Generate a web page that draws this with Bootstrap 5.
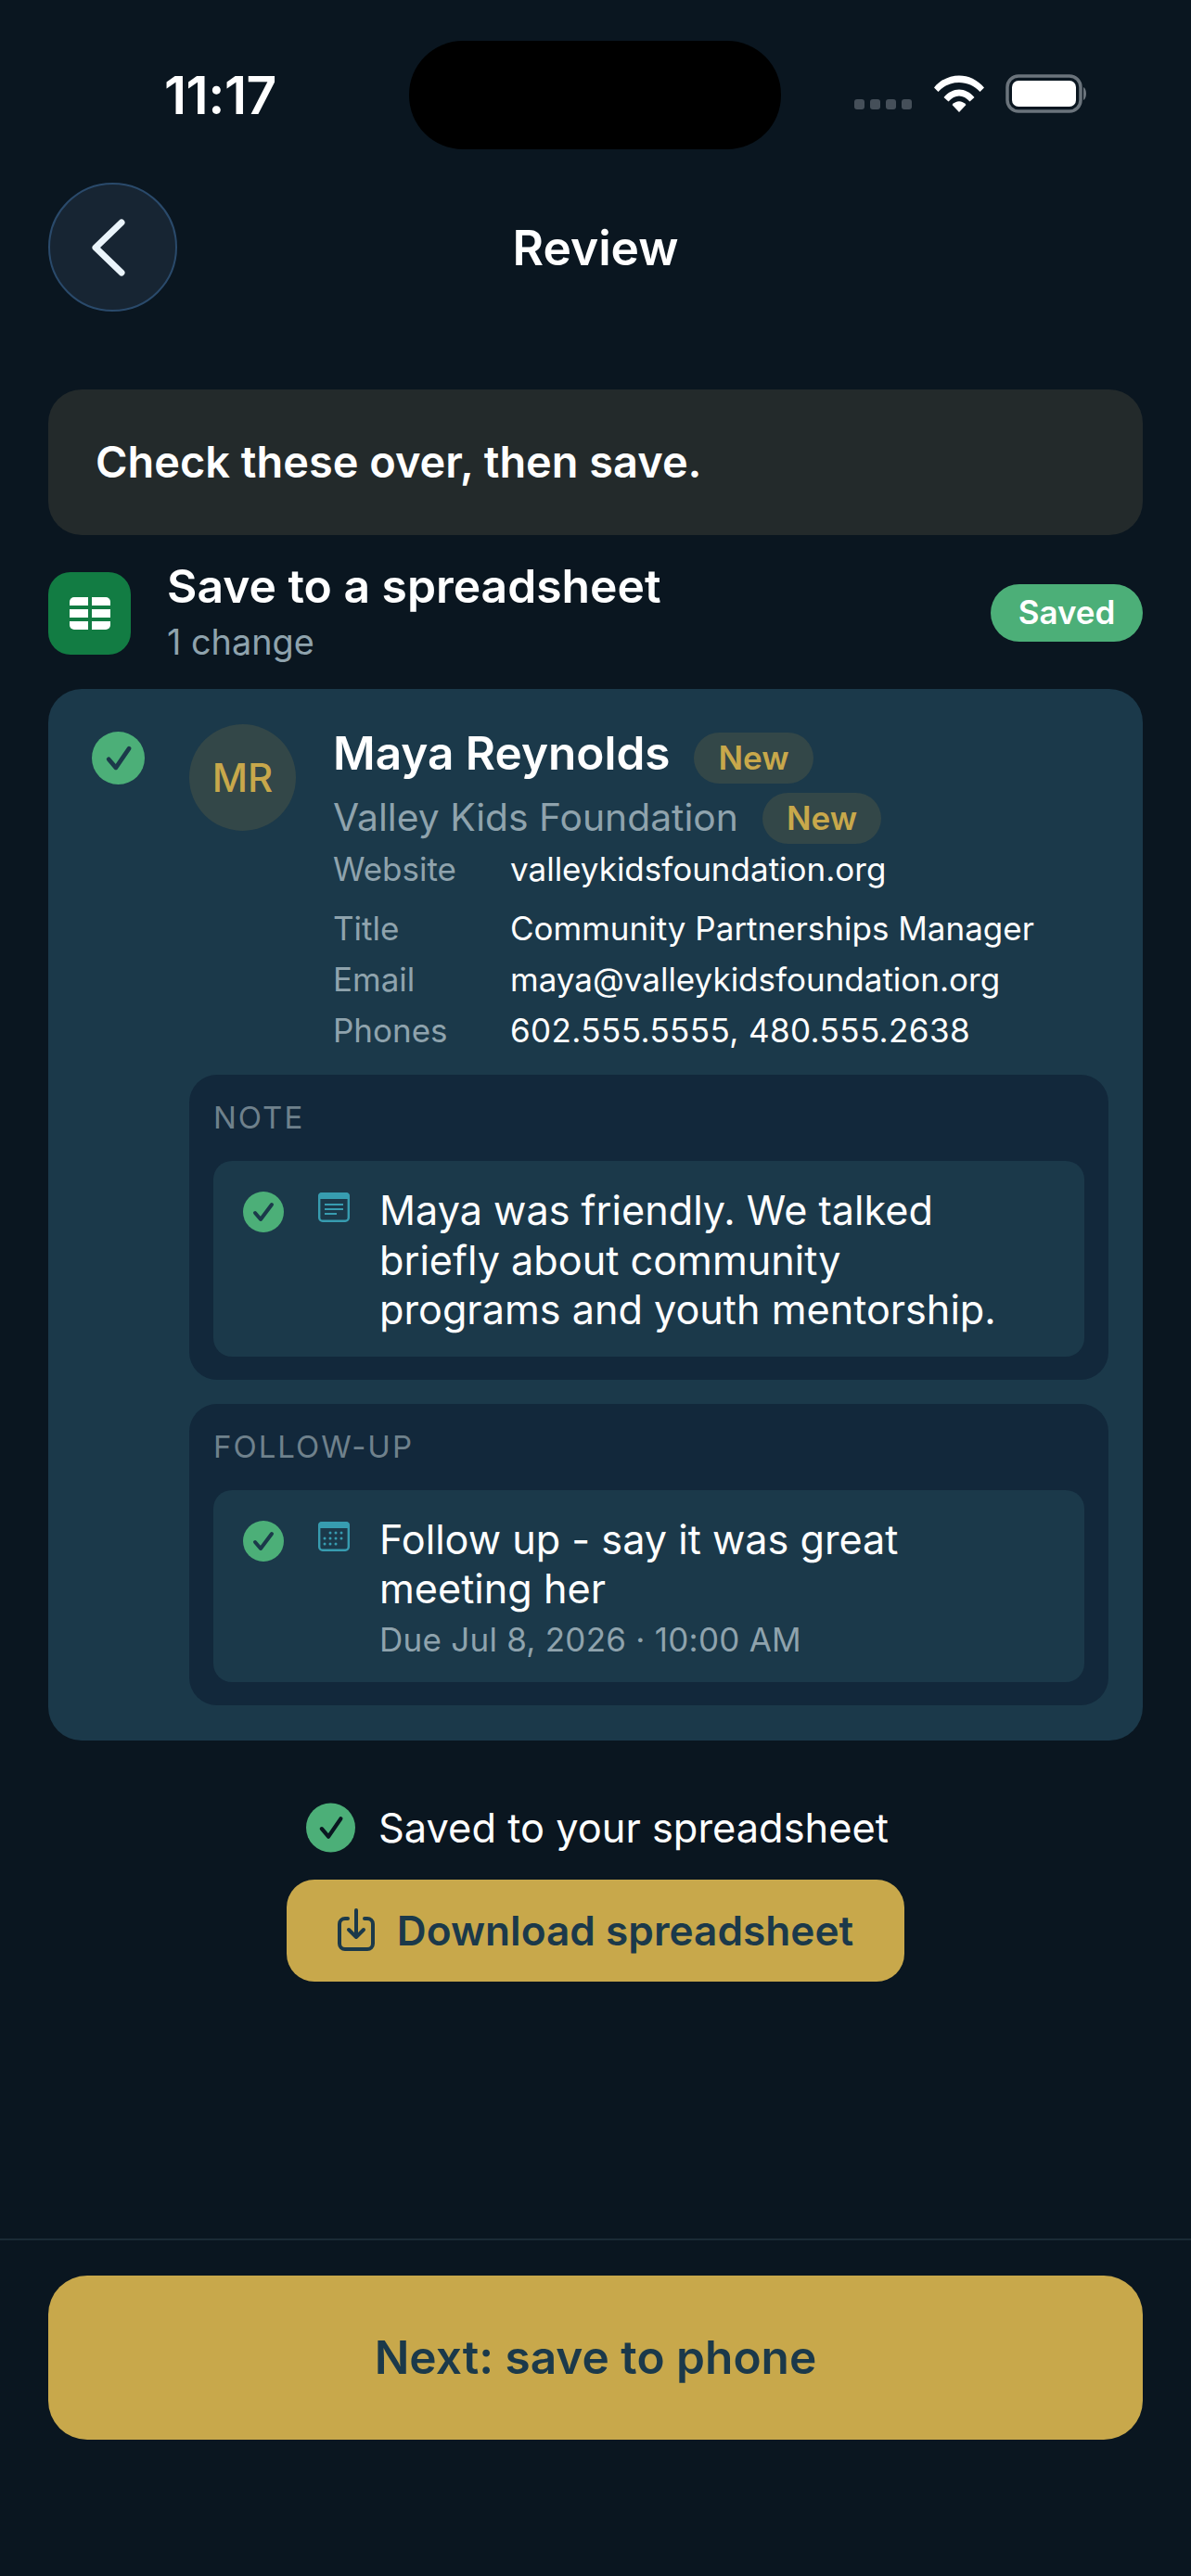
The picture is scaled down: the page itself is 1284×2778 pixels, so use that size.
<!DOCTYPE html>
<html lang="en">
<head>
  <meta charset="UTF-8" />
  <meta name="viewport" content="width=device-width, initial-scale=1" />
  <title>Review</title>
  <link href="https://cdn.jsdelivr.net/npm/bootstrap@5.3.0/dist/css/bootstrap.min.css" rel="stylesheet" />
  <style>
    body {
      font-family: Inter, "Liberation Sans", sans-serif;
      background: #0a1620;
      color: #fff;
      width: 1284px;
      height: 2778px;
      overflow: hidden;
    }
    .screen { height: 2778px; }
    .status-bar { padding: 44px 62px 0 177px; height: 161px; }
    .status-time { width: 264px; font-size: 57px; font-weight: 600; line-height: 60px; letter-spacing: -0.5px; }
    .island { width: 401px; height: 117px; background: #000; border-radius: 58px; }
    .status-icons { margin-left: 79px; margin-top: -4px; }
    .sig-dot { width: 11px; height: 11px; border-radius: 3px; background: #454f59; }
    .sig-dots { margin-top: 24px; margin-right: 24px; gap: 6px; }
    .battery { margin-left: 23px; }
    .top-bar { margin: 36px 52px 0; height: 139px; }
    .back-btn { width: 139px; height: 139px; border-radius: 50%; background: #172533; border: 2px solid #2a4a6b; }
    .back-btn svg { margin-left: -9px; }
    .page-title { font-size: 51.5px; font-weight: 600; line-height: 60px; }
    .intro-box { margin: 84px 52px 0; height: 157px; padding-left: 51px; background: #232a2b; border-radius: 36px; font-size: 46.9px; font-weight: 600; }
    .sheet-head { margin: 40px 52px 0; height: 88px; }
    .sheet-icon { width: 89px; height: 89px; border-radius: 24px; background: #127c43; }
    .sheet-text { margin-left: 39px; }
    .sheet-title { font-size: 49.8px; font-weight: 600; line-height: 58px; margin-top: -5px; }
    .sheet-sub { font-size: 37.8px; line-height: 44px; color: #8fa3ad; margin-top: 9px; }
    .saved-pill { width: 164px; height: 62px; border-radius: 31px; background: #4caf78; font-size: 35px; font-weight: 600; margin-top: -1px; }
    .review-card { margin: 38px 52px 0; padding: 38px 37px 38px 47px; height: 1134px; background: #1b394a; border-radius: 36px; }
    .tick { flex: none; }
    .card-body-col { margin-left: 48px; }
    .avatar { width: 115px; height: 115px; border-radius: 50%; background: #334748; color: #c8a84b; font-size: 42px; font-weight: 500; }
    .person { margin-left: 40px; margin-top: -3px; }
    .person-name { height: 68px; }
    .person-name span:first-child { font-size: 49.5px; font-weight: 600; }
    .person-org { height: 67px; padding-top: 5px; }
    .person-org span:first-child { font-size: 40.8px; color: #8fa3ad; }
    .new-tag { height: 55px; padding: 0 26px; border-radius: 28px; background: #334748; color: #c8a84b; font-size: 35px; font-weight: 600; margin-left: 26px; }
    .person-name .new-tag { margin-top: 10px; }
    .facts { display: grid; grid-template-columns: 191px auto; font-size: 35px; line-height: 48px; margin-left: 155px; row-gap: 7px; }
    .facts dt { font-weight: 400; color: #8fa3ad; }
    .facts dd { margin: 0; }
    .facts .first-fact { margin-bottom: 9px; }
    .facts .phone-fact { letter-spacing: 0.4px; }
    .sub-box { background: #12283b; border-radius: 30px; padding: 26px 26px 25px; margin-top: 26px; }
    .facts + .sub-box { margin-top: 24px; }
    .sub-label { font-size: 33px; line-height: 40px; letter-spacing: 2px; color: #6f818c; margin-bottom: 27px; }
    .sub-item { background: #1b394a; border-radius: 20px; padding: 27px 32px 23px; }
    .sub-tick { margin-top: 6px; }
    .sub-icon { margin: 7px 32px 0 37px; flex: none; }
    .sub-text { font-size: 43.2px; line-height: 53.5px; }
    .note-text { max-width: 690px; }
    .due-text { font-size: 35px; line-height: 46px; color: #8fa3ad; margin-top: 4px; letter-spacing: 0.25px; }
    .done-row { margin-top: 67px; padding-left: 330px; font-size: 43.4px; line-height: 54px; }
    .done-row svg { margin-right: 25px; }
    .dl-btn { margin: 29px 0 0 309px; width: 666px; height: 110px; border: 0; border-radius: 30px; background: #c8a84b; color: #1b394a; font-size: 44.2px; font-weight: 600; }
    .dl-btn svg { margin-right: 24px; margin-top: -2px; }
    .bottom-bar { margin-top: auto; border-top: 2px solid #1a2a35; padding: 38px 52px 147px; }
    .next-btn { width: 100%; height: 177px; border: 0; border-radius: 42px; background: #c8a84b; color: #1b394a; font-size: 49.6px; font-weight: 600; }
  </style>
</head>
<body>
  <div class="screen d-flex flex-column">
    <!-- Status bar -->
    <div class="status-bar d-flex align-items-center">
      <div class="status-time">11:17</div>
      <div class="island"></div>
      <div class="status-icons d-flex align-items-center">
        <div class="sig-dots d-flex">
          <div class="sig-dot"></div><div class="sig-dot"></div><div class="sig-dot"></div><div class="sig-dot"></div>
        </div>
        <svg width="54" height="40" viewBox="0 0 54 40" fill="#fff">
          <path d="M0 13.5C14 -4 40 -4 54 13.5L49.5 18C38 4.5 16 4.5 4.5 18Z"/>
          <path d="M10.5 24C20 12.5 34 12.5 43.5 24L38.5 28.5C31.5 20.5 22.5 20.5 15.5 28.5Z"/>
          <path d="M19.5 32C24 27 30 27 34.5 32L27 40Z"/>
        </svg>
        <svg class="battery" width="88" height="42" viewBox="0 0 88 42">
          <rect x="2" y="2" width="79" height="38" rx="12" fill="none" stroke="#6b747c" stroke-width="3.5"/>
          <rect x="7" y="7" width="69" height="28" rx="7" fill="#fff"/>
          <path d="M84 14C88 16 88 26 84 28Z" fill="#6b747c"/>
        </svg>
      </div>
    </div>

    <!-- Title row -->
    <div class="top-bar position-relative d-flex align-items-center justify-content-center">
      <div class="back-btn position-absolute top-0 start-0 d-flex align-items-center justify-content-center">
        <svg width="38" height="62" viewBox="0 0 38 62" fill="none" stroke="#eaf4fb" stroke-width="7" stroke-linecap="round" stroke-linejoin="round">
          <path d="M33 4L5 31L33 58"/>
        </svg>
      </div>
      <div class="page-title">Review</div>
    </div>

    <div class="intro-box d-flex align-items-center">Check these over, then save.</div>

    <!-- Spreadsheet section -->
    <div class="sheet-head d-flex align-items-center">
      <div class="sheet-icon d-flex align-items-center justify-content-center">
        <svg width="44" height="35" viewBox="0 0 44 35" fill="#fff">
          <path d="M5 0H20V9H0V5A5 5 0 0 1 5 0Z"/>
          <path d="M24 0H39A5 5 0 0 1 44 5V9H24Z"/>
          <rect x="0" y="13" width="20" height="9"/>
          <rect x="24" y="13" width="20" height="9"/>
          <path d="M0 26H20V35H5A5 5 0 0 1 0 30Z"/>
          <path d="M24 26H44V30A5 5 0 0 1 39 35H24Z"/>
        </svg>
      </div>
      <div class="sheet-text flex-grow-1">
        <div class="sheet-title">Save to a spreadsheet</div>
        <div class="sheet-sub">1 change</div>
      </div>
      <div class="saved-pill d-flex align-items-center justify-content-center">Saved</div>
    </div>

    <!-- Contact card -->
    <div class="review-card d-flex">
      <svg class="tick mt-2" width="57" height="57" viewBox="0 0 44 44">
        <circle cx="22" cy="22" r="22" fill="#4caf78"/>
        <path d="M14 23L20 30L31 14" fill="none" stroke="#1b394a" stroke-width="3.6" stroke-linecap="round" stroke-linejoin="round"/>
      </svg>
      <div class="card-body-col flex-grow-1">
        <div class="d-flex">
          <div class="avatar d-flex align-items-center justify-content-center flex-shrink-0">MR</div>
          <div class="person flex-grow-1">
            <div class="person-name d-flex align-items-center">
              <span>Maya Reynolds</span>
              <span class="new-tag d-flex align-items-center">New</span>
            </div>
            <div class="person-org d-flex align-items-center">
              <span>Valley Kids Foundation</span>
              <span class="new-tag d-flex align-items-center">New</span>
            </div>
          </div>
        </div>
        <dl class="facts mb-0" id="facts"></dl>

        <div class="sub-box">
          <div class="sub-label">NOTE</div>
          <div class="sub-item d-flex">
            <svg class="tick sub-tick" width="44" height="44" viewBox="0 0 44 44">
              <circle cx="22" cy="22" r="22" fill="#4caf78"/>
              <path d="M13 23L19 30L31 14" fill="none" stroke="#1b394a" stroke-width="4" stroke-linecap="round" stroke-linejoin="round"/>
            </svg>
            <svg class="sub-icon" width="34" height="32" viewBox="0 0 34 32">
              <rect x="1.2" y="1.2" width="31.6" height="29.6" rx="3.5" fill="none" stroke="#379cb0" stroke-width="2.4"/>
              <path d="M4 0H30A4 4 0 0 1 34 4V7H0V4A4 4 0 0 1 4 0Z" fill="#379cb0"/>
              <path d="M7 13H27M7 18H27M7 23H20" stroke="#379cb0" stroke-width="2.2"/>
            </svg>
            <div class="sub-text note-text">Maya was friendly. We talked briefly about community programs and youth mentorship.</div>
          </div>
        </div>

        <div class="sub-box">
          <div class="sub-label">FOLLOW-UP</div>
          <div class="sub-item d-flex">
            <svg class="tick sub-tick" width="44" height="44" viewBox="0 0 44 44">
              <circle cx="22" cy="22" r="22" fill="#4caf78"/>
              <path d="M13 23L19 30L31 14" fill="none" stroke="#1b394a" stroke-width="4" stroke-linecap="round" stroke-linejoin="round"/>
            </svg>
            <svg class="sub-icon" width="34" height="32" viewBox="0 0 34 32" fill="#379cb0">
              <rect x="1.2" y="1.2" width="31.6" height="29.6" rx="3.5" fill="none" stroke="#379cb0" stroke-width="2.4"/>
              <path d="M4 0H30A4 4 0 0 1 34 4V7H0V4A4 4 0 0 1 4 0Z"/>
              <g id="cal-dots"></g>
            </svg>
            <div>
              <div class="sub-text">Follow up - say it was great meeting her</div>
              <div class="due-text">Due Jul 8, 2026 · 10:00 AM</div>
            </div>
          </div>
        </div>
      </div>
    </div>

    <!-- Saved confirmation -->
    <div class="done-row d-flex align-items-center">
      <svg width="53" height="54" viewBox="0 0 44 44">
        <circle cx="22" cy="22" r="22" fill="#4caf78"/>
        <path d="M14 23L20 30L31 14" fill="none" stroke="#0a1620" stroke-width="3.6" stroke-linecap="round" stroke-linejoin="round"/>
      </svg>
      <span>Saved to your spreadsheet</span>
    </div>
    <button class="dl-btn d-flex align-items-center justify-content-center" type="button">
      <svg width="40" height="46" viewBox="0 0 40 46" fill="none" stroke="#1b394a" stroke-width="4" stroke-linecap="round" stroke-linejoin="round">
        <path d="M11 11H8A6 6 0 0 0 2 17V38A6 6 0 0 0 8 44H32A6 6 0 0 0 38 38V17A6 6 0 0 0 32 11H29"/>
        <path d="M20 2V31M12 23L20 31L28 23"/>
      </svg>
      Download spreadsheet
    </button>

    <div class="bottom-bar">
      <button class="next-btn" type="button">Next: save to phone</button>
    </div>
  </div>

  <script src="https://cdn.jsdelivr.net/npm/bootstrap@5.3.0/dist/js/bootstrap.bundle.min.js"></script>
  <script>
    // Contact fields
    const facts = [
      ['Website', 'valleykidsfoundation.org'],
      ['Title', 'Community Partnerships Manager'],
      ['Email', 'maya@valleykidsfoundation.org'],
      ['Phones', '602.555.5555, 480.555.2638', 'phone-fact']
    ];
    document.getElementById('facts').innerHTML = facts.map((f, i) => {
      const cls = i === 0 ? ' class="first-fact"' : '';
      const valCls = f[2] ? ` class="${f[2]}"` : cls;
      return `<dt${cls}>${f[0]}</dt><dd${valCls}>${f[1]}</dd>`;
    }).join('');

    // Calendar icon dots
    const rows = [[12, [13, 19, 25]], [18, [7, 13, 19, 25]], [24, [7, 13, 19]]];
    document.getElementById('cal-dots').innerHTML = rows.map(r =>
      r[1].map(x => `<circle cx="${x}" cy="${r[0]}" r="1.5"/>`).join('')
    ).join('');
  </script>
</body>
</html>
